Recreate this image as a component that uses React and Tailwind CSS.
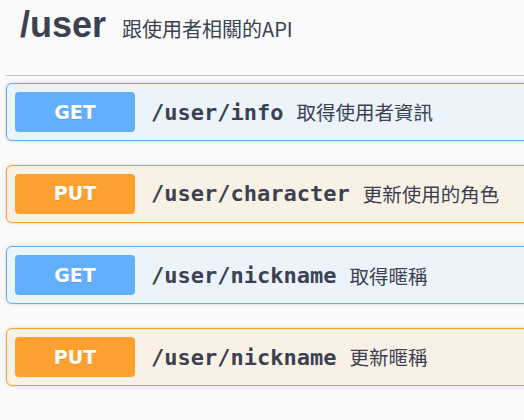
import React from "react";

const ops = [
  { method: "GET", path: "/user/info", desc: "取得使用者資訊" },
  { method: "PUT", path: "/user/character", desc: "更新使用的角色" },
  { method: "GET", path: "/user/nickname", desc: "取得暱稱" },
  { method: "PUT", path: "/user/nickname", desc: "更新暱稱" },
];

const cjk = { fontFamily: '"Noto Sans CJK TC", "Noto Sans", sans-serif' };

const OpBlock = ({ method, path, desc }) => {
  const get = method === "GET";
  return (
    <div
      className={
        get
          ? "w-[560px] h-[58px] flex items-center px-[8px] rounded-[6px] border border-[#61affe] bg-[#ebf3fb] shadow-[0_0_3px_rgba(0,0,0,0.19)]"
          : "w-[560px] h-[58px] flex items-center px-[8px] rounded-[6px] border border-[#fca130] bg-[#faf1e6] shadow-[0_0_3px_rgba(0,0,0,0.19)]"
      }
    >
      <div
        className={
          get
            ? "w-[120px] h-[40px] shrink-0 rounded-[4px] bg-[#61affe] flex items-center justify-center"
            : "w-[120px] h-[40px] shrink-0 rounded-[4px] bg-[#fca130] flex items-center justify-center"
        }
      >
        <span className="text-white font-bold text-[19px] [text-shadow:0_1px_0_rgba(0,0,0,0.1)] font-['DejaVu_Sans',sans-serif]">
          {method}
        </span>
      </div>
      <span className="ml-[16px] text-[22px] font-bold text-[#3b4151] font-['DejaVu_Sans_Mono',monospace] whitespace-nowrap">
        {path}
      </span>
      <span className="ml-[13px] text-[19.5px] text-[#3b4151] whitespace-nowrap" style={cjk}>
        {desc}
      </span>
    </div>
  );
};

export default function App() {
  return (
    <div className="w-[524px] h-[420px] overflow-hidden bg-[#fafafa]">
      {/* tag header */}
      <div className="ml-[6px] h-[76px] border-b border-[#c1c3c7] flex items-baseline pl-[14px] pt-[6.5px]">
        <h3 className="text-[36px] leading-[36px] font-bold text-[#3b4151] font-['Liberation_Sans',Arial,sans-serif]">
          /user
        </h3>
        <span className="ml-[16px] text-[20px] text-[#3b4151]" style={cjk}>
          跟使用者相關的API
        </span>
      </div>

      {/* operations */}
      <div className="mt-[7px] ml-[6px] flex flex-col gap-[23.7px]">
        {ops.map((op, i) => (
          <OpBlock key={i} {...op} />
        ))}
      </div>
    </div>
  );
}
